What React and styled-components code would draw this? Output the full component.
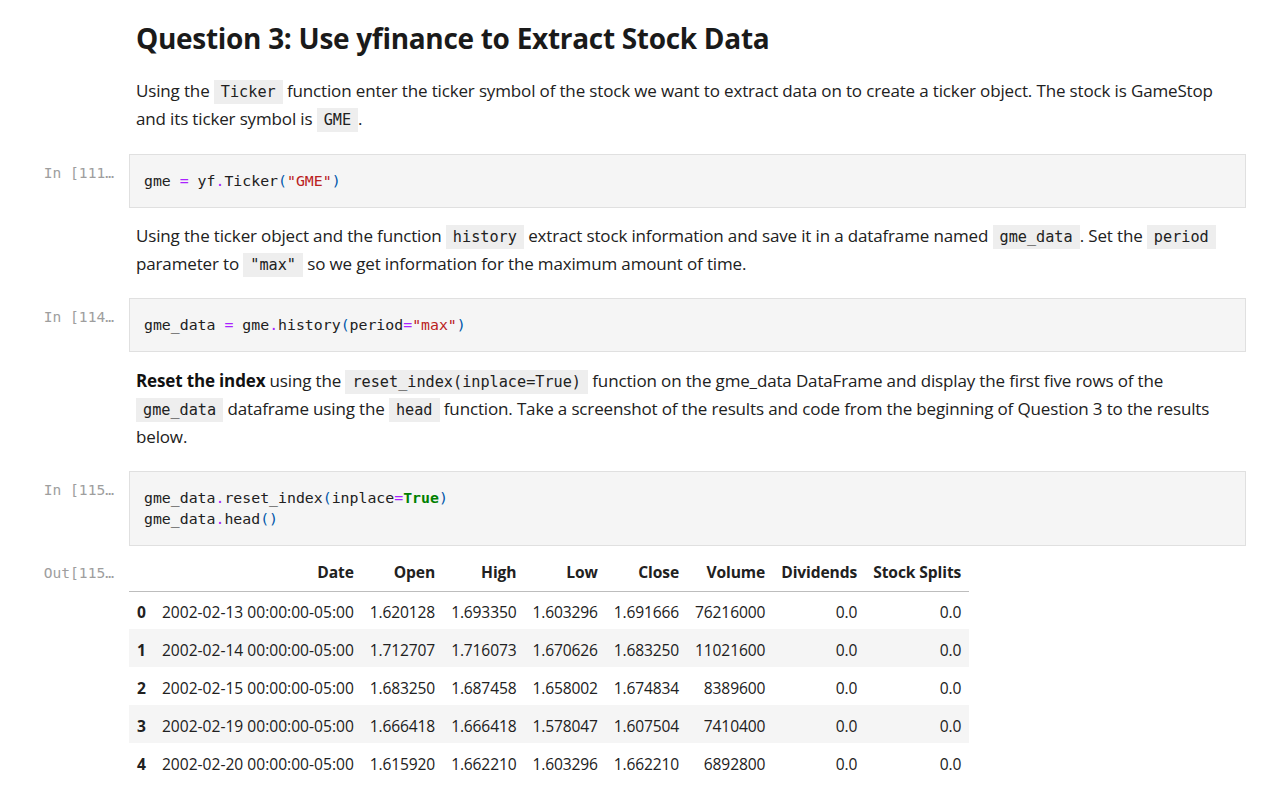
import React from "react";
import styled, { createGlobalStyle } from "styled-components";

const GlobalStyle = createGlobalStyle`
  html, body {
    margin: 0;
    padding: 0;
    background: #ffffff;
  }
  body {
    font-family: "Open Sans", "Noto Sans", sans-serif;
    color: #212121;
  }
`;

const mono = `"DejaVu Sans Mono", "Liberation Mono", monospace`;

const Notebook = styled.main`
  width: 1275px;
  padding: 18px 29px 20px 0;
  box-sizing: border-box;
`;

const Cell = styled.section`
  display: flex;
  align-items: flex-start;
  margin-top: ${(p) => p.$top || 0}px;
`;

const Prompt = styled.div`
  flex: 0 0 129px;
  box-sizing: border-box;
  padding: ${(p) => p.$pad || 12}px 15px 0 0;
  text-align: right;
  font-family: ${mono};
  font-size: 14.6px;
  color: #9e9e9e;
  white-space: nowrap;
`;

const Body = styled.div`
  flex: 1;
  min-width: 0;
`;

const Markdown = styled.div`
  padding: 0 0 0 7px;
  font-size: 17px;
  line-height: 28px;
  letter-spacing: -0.15px;

  h2 {
    margin: 0 0 19px;
    font-size: 28px;
    line-height: 40px;
    font-weight: 700;
    letter-spacing: -0.3px;
    color: #1a1a1a;
  }
  p {
    margin: 0;
  }
  strong {
    font-weight: 700;
    color: #111;
  }
`;

const Code = styled.code`
  font-family: ${mono};
  font-size: 15.2px;
  line-height: 1;
  letter-spacing: 0;
  background: #eeeeee;
  padding: 3px 7px;
  color: #212121;
`;

const Editor = styled.pre`
  margin: 0;
  background: #f5f5f5;
  border: 1px solid #e0e0e0;
  padding: 16px 14px 15px;
  font-family: ${mono};
  font-size: 14.85px;
  line-height: 21px;
  color: #212121;
`;

const Op = styled.span`
  color: #aa22ff;
`;
const Str = styled.span`
  color: #ba2121;
`;
const Br = styled.span`
  color: #0055aa;
`;
const Kw = styled.span`
  color: #008000;
  font-weight: 700;
`;

const Table = styled.table`
  border-collapse: collapse;
  font-size: 15.6px;
  color: #212121;

  th, td {
    height: 38px;
    padding: 0 8px;
    text-align: right;
    white-space: nowrap;
    box-sizing: border-box;
  }
  thead th {
    font-weight: 700;
    border-bottom: 1px solid #bdbdbd;
    vertical-align: middle;
    letter-spacing: -0.1px;
  }
  tbody th,
  tbody td {
    padding-top: 3px;
  }
  tbody th {
    font-weight: 700;
    text-align: left;
  }
  td + td {
    letter-spacing: -0.15px;
  }
  tbody tr:nth-child(even) {
    background: #f5f5f5;
  }
`;

const columns = ["Date", "Open", "High", "Low", "Close", "Volume", "Dividends", "Stock Splits"];

const rows = [
  ["2002-02-13 00:00:00-05:00", "1.620128", "1.693350", "1.603296", "1.691666", "76216000", "0.0", "0.0"],
  ["2002-02-14 00:00:00-05:00", "1.712707", "1.716073", "1.670626", "1.683250", "11021600", "0.0", "0.0"],
  ["2002-02-15 00:00:00-05:00", "1.683250", "1.687458", "1.658002", "1.674834", "8389600", "0.0", "0.0"],
  ["2002-02-19 00:00:00-05:00", "1.666418", "1.666418", "1.578047", "1.607504", "7410400", "0.0", "0.0"],
  ["2002-02-20 00:00:00-05:00", "1.615920", "1.662210", "1.603296", "1.662210", "6892800", "0.0", "0.0"],
];

const App = () => {
  return (
    <Notebook>
      <GlobalStyle />

      <Cell>
        <Prompt />
        <Body>
          <Markdown>
            <h2>Question 3: Use yfinance to Extract Stock Data</h2>
            <p>
              Using the <Code>Ticker</Code> function enter the ticker symbol of the stock we want to
              extract data on to create a ticker object. The stock is GameStop and its ticker symbol
              is <Code>GME</Code>.
            </p>
          </Markdown>
        </Body>
      </Cell>

      <Cell $top={21}>
        <Prompt $pad={10}>In [111…</Prompt>
        <Body>
          <Editor>
            gme <Op>=</Op> yf<Op>.</Op>Ticker<Br>(</Br>
            <Str>"GME"</Str>
            <Br>)</Br>
          </Editor>
        </Body>
      </Cell>

      <Cell $top={14}>
        <Prompt />
        <Body>
          <Markdown>
            <p>
              Using the ticker object and the function <Code>history</Code> extract stock information
              and save it in a dataframe named <Code>gme_data</Code>. Set the <Code>period</Code>{" "}
              parameter to <Code>"max"</Code> so we get information for the maximum amount of time.
            </p>
          </Markdown>
        </Body>
      </Cell>

      <Cell $top={20}>
        <Prompt $pad={10}>In [114…</Prompt>
        <Body>
          <Editor>
            gme_data <Op>=</Op> gme<Op>.</Op>history<Br>(</Br>period<Op>=</Op>
            <Str>"max"</Str>
            <Br>)</Br>
          </Editor>
        </Body>
      </Cell>

      <Cell $top={15}>
        <Prompt />
        <Body>
          <Markdown>
            <p>
              <strong>Reset the index</strong> using the <Code>reset_index(inplace=True)</Code>{" "}
              function on the gme_data DataFrame and display the first five rows of the{" "}
              <Code>gme_data</Code> dataframe using the <Code>head</Code> function. Take a screenshot
              of the results and code from the beginning of Question 3 to the results below.
            </p>
          </Markdown>
        </Body>
      </Cell>

      <Cell $top={20}>
        <Prompt $pad={10}>In [115…</Prompt>
        <Body>
          <Editor>
            gme_data<Op>.</Op>reset_index<Br>(</Br>inplace<Op>=</Op>
            <Kw>True</Kw>
            <Br>)</Br>
            {"\n"}gme_data<Op>.</Op>head<Br>()</Br>
          </Editor>
        </Body>
      </Cell>

      <Cell $top={7}>
        <Prompt $pad={11}>Out[115…</Prompt>
        <Body>
          <Table>
            <thead>
              <tr>
                <th />
                {columns.map((c) => (
                  <th key={c}>{c}</th>
                ))}
              </tr>
            </thead>
            <tbody>
              {rows.map((r, i) => (
                <tr key={i}>
                  <th>{i}</th>
                  {r.map((v, j) => (
                    <td key={j}>{v}</td>
                  ))}
                </tr>
              ))}
            </tbody>
          </Table>
        </Body>
      </Cell>
    </Notebook>
  );
};

export default App;
